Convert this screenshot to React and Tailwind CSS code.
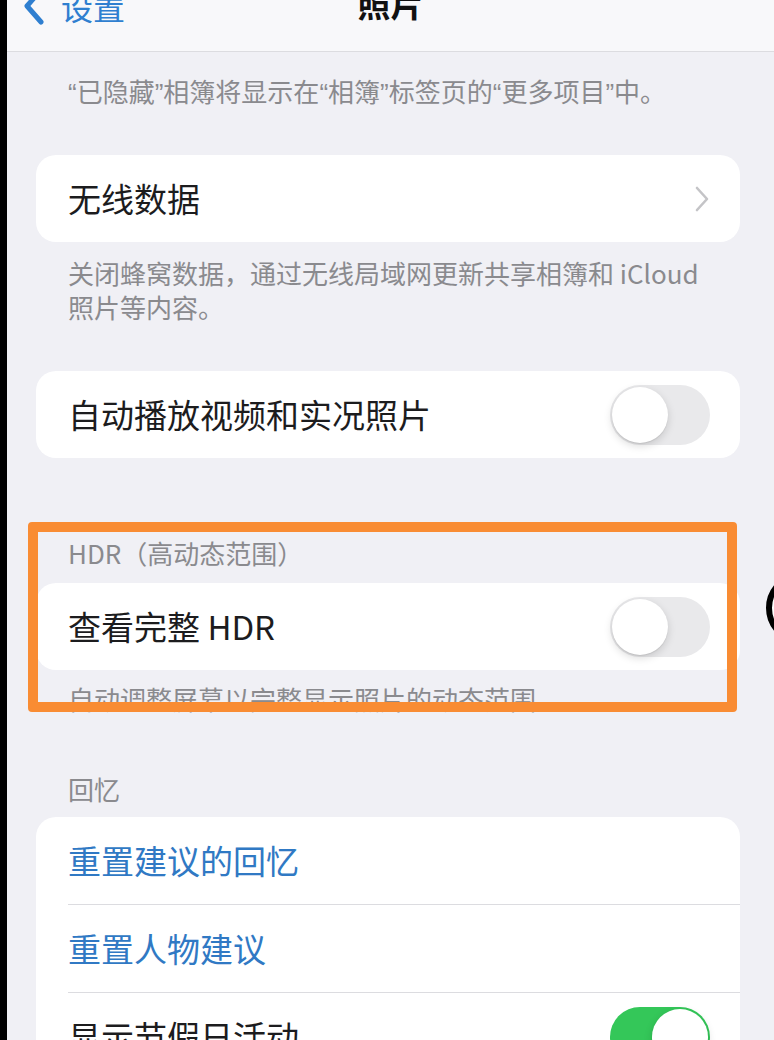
import React from "react";

const font = { fontFamily: '"Noto Sans CJK SC", "Noto Sans", sans-serif' };

// western-width quote marks, like the system font draws them
function Q({ children }) {
  return <span style={{ fontFamily: '"Liberation Sans", sans-serif' }}>{children}</span>;
}

function Toggle({ on }) {
  return (
    <div
      className={`relative w-[100px] h-[60px] rounded-full shrink-0 ${
        on ? "bg-[#34c759]" : "bg-[#e9e9eb]"
      }`}
    >
      <div
        className={`absolute top-[2px] w-[56px] h-[56px] rounded-full bg-white shadow-[0_3px_8px_rgba(0,0,0,0.15),0_1px_1px_rgba(0,0,0,0.08)] ${
          on ? "right-[2px]" : "left-[2px]"
        }`}
      />
    </div>
  );
}

function Chevron() {
  return (
    <svg width="16" height="28" viewBox="0 0 16 28" fill="none">
      <path d="M3 3l10 11-10 11" stroke="#c4c4c7" strokeWidth="2.6" strokeLinecap="round" strokeLinejoin="round" />
    </svg>
  );
}

function Card({ children }) {
  return <div className="ml-[29px] mr-[34px] bg-white rounded-[20px] overflow-hidden">{children}</div>;
}

function Row({ label, right, blue, divider }) {
  return (
    <div className="relative">
      <div className="h-[87px] pl-[32px] pr-[30px] flex items-center justify-between">
        <span className={`text-[33px] leading-none ${blue ? "text-[#3079c4]" : "text-[#1c1c1e]"}`}>{label}</span>
        {right}
      </div>
      {divider && <div className="ml-[32px] h-px bg-[#dcdce0]" />}
    </div>
  );
}

function Note({ children, className = "" }) {
  return <p className={`pl-[61px] pr-[20px] text-[26px] leading-[34px] text-[#8a8a8e] ${className}`}>{children}</p>;
}

export default function App() {
  return (
    <div style={font} className="relative w-[774px] h-[1040px] overflow-hidden bg-[#f0f0f5] flex">
      {/* phone bezel edge */}
      <div className="w-[7px] shrink-0 bg-black" />

      <div className="flex-1 flex flex-col">
        {/* nav bar */}
        <div className="h-[52px] shrink-0 bg-[#f8f8fa] border-b border-[#dcdce0] relative">
          <div className="absolute left-[14px] top-[-14px] flex items-center gap-[14px]">
            <svg width="26" height="40" viewBox="0 0 26 40" fill="none">
              <path d="M20 4L6 20l14 16" stroke="#2f7fd0" strokeWidth="5" strokeLinecap="round" strokeLinejoin="round" />
            </svg>
            <span className="text-[32px] text-[#2f7fd0] leading-none">设置</span>
          </div>
          <div className="absolute left-0 right-0 top-[-13px] text-center">
            <span className="text-[33px] font-semibold text-[#111] leading-none">照片</span>
          </div>
        </div>

        {/* tail of the card above */}
        <div className="ml-[29px] mr-[34px] mt-[4px] h-[8px] bg-white rounded-b-[20px]" />

        <Note className="mt-[18px]">
          <Q>“</Q>已隐藏<Q>”</Q>相簿将显示在<Q>“</Q>相簿<Q>”</Q>标签页的<Q>“</Q>更多项目<Q>”</Q>中。
        </Note>

        <div className="mt-[45px]">
          <Card>
            <Row label="无线数据" right={<Chevron />} />
          </Card>
        </div>

        <Note className="mt-[14px]">
          关闭蜂窝数据，通过无线局域网更新共享相簿和 iCloud
          <br />
          照片等内容。
        </Note>

        <div className="mt-[47px]">
          <Card>
            <Row label="自动播放视频和实况照片" right={<Toggle on={false} />} />
          </Card>
        </div>

        <Note className="mt-[78px]">HDR（高动态范围）</Note>

        <div className="mt-[13px]">
          <Card>
            <Row label="查看完整 HDR" right={<Toggle on={false} />} />
          </Card>
        </div>

        <Note className="mt-[12px]">自动调整屏幕以完整显示照片的动态范围。</Note>

        <Note className="mt-[56px]">回忆</Note>

        <div className="mt-[11px]">
          <Card>
            <Row label="重置建议的回忆" blue divider />
            <Row label="重置人物建议" blue divider />
            <Row label="显示节假日活动" right={<Toggle on />} />
          </Card>
        </div>
      </div>

      {/* highlight frame */}
      <div className="absolute left-[28px] top-[522px] w-[709px] h-[190px] border-[10px] border-[#f98c33] rounded-[4px]" />

      {/* floating control peeking from the right edge */}
      <div className="absolute left-[766px] top-[572px] w-[72px] h-[72px] rounded-full bg-white border-[6px] border-black" />
    </div>
  );
}
